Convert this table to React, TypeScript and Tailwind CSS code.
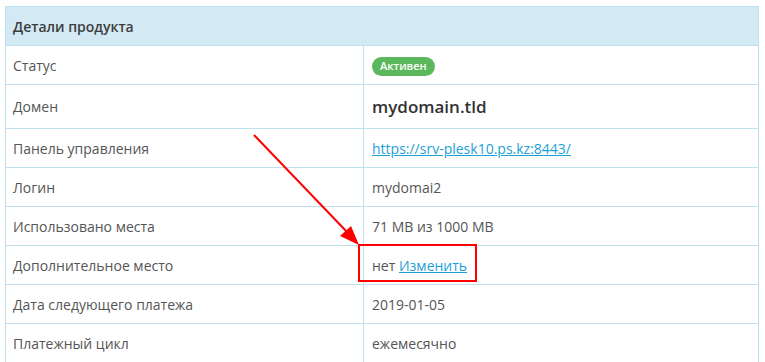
import React from 'react';

type Row = { label: string; value: React.ReactNode; tall?: boolean };

const rows: Row[] = [
  {
    label: 'Статус',
    value: (
      <span className="inline-flex h-[19px] items-center rounded-full bg-[#5cb85c] px-[8px] text-[11px] font-semibold text-white">
        Активен
      </span>
    ),
  },
  {
    label: 'Домен',
    value: <span className="text-[17px] font-semibold text-[#333]">mydomain.tld</span>,
    tall: true,
  },
  {
    label: 'Панель управления',
    value: (
      <a href="#" className="text-[#1e9fd6] underline">
        https://srv-plesk10.ps.kz:8443/
      </a>
    ),
  },
  { label: 'Логин', value: 'mydomai2' },
  { label: 'Использовано места', value: '71 MB из 1000 MB' },
  {
    label: 'Дополнительное место',
    value: (
      <>
        нет{' '}
        <a href="#" className="text-[#1e9fd6] underline">
          Изменить
        </a>
      </>
    ),
  },
  { label: 'Дата следующего платежа', value: '2019-01-05' },
  { label: 'Платежный цикл', value: 'ежемесячно' },
];

export default function App() {
  return (
    <div
      className="relative h-[362px] w-[765px] overflow-hidden bg-white pl-[5px] pt-[6px] text-[14px] text-[#555]"
      style={{ fontFamily: '"Open Sans", "Liberation Sans", sans-serif' }}
    >
      <div className="w-[754px] border-x border-t border-[#bfe1ef]">
        <div className="flex h-[39px] items-center border-b border-[#bfe1ef] bg-[#d3eaf5] pl-[7px] font-semibold text-[#3d3d3d]">
          Детали продукта
        </div>
        {rows.map((r) => (
          <div
            key={r.label}
            className={`flex border-b border-[#bfe1ef] ${r.tall ? 'h-[44px]' : 'h-[39px]'}`}
          >
            <div className="flex w-[357px] items-center pl-[7px]">{r.label}</div>
            <div className="flex flex-1 items-center border-l border-[#bfe1ef] pl-[8px]">
              <span>{r.value}</span>
            </div>
          </div>
        ))}
      </div>

      {/* annotation overlay */}
      <svg className="pointer-events-none absolute left-0 top-0" width="765" height="362">
        <line x1="254" y1="135" x2="348" y2="233" stroke="#f00" strokeWidth="2" />
        <polygon points="359,245 340,236 351,226" fill="#f00" />
      </svg>
      <div className="pointer-events-none absolute left-[358px] top-[244px] h-[38px] w-[119px] border-2 border-[#f00]" />
    </div>
  );
}
